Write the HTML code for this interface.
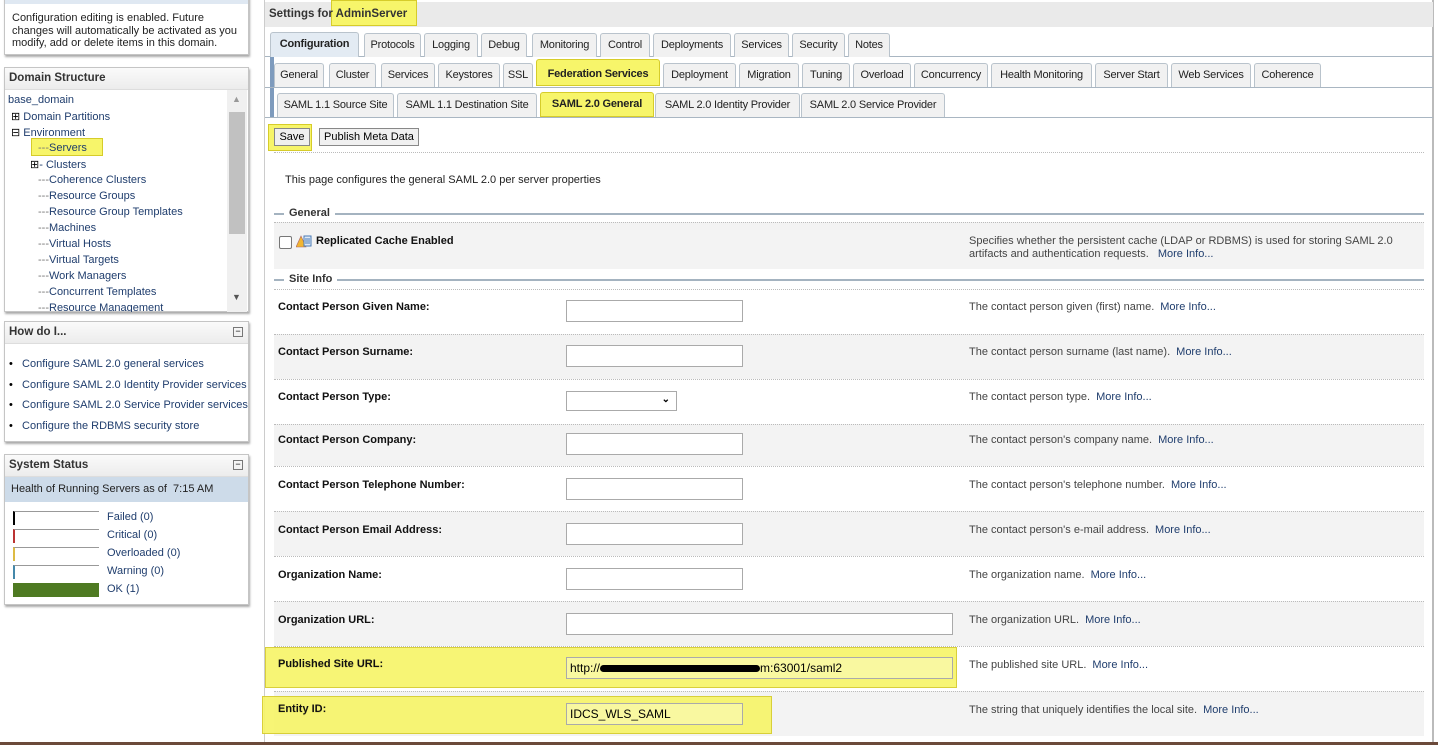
<!DOCTYPE html>
<html><head><meta charset="utf-8"><style>
*{box-sizing:border-box}
body{margin:0;width:1438px;height:745px;overflow:hidden;background:#fff;font-family:"Liberation Sans",sans-serif;font-size:11px;color:#000;position:relative}
.a{position:absolute}
.panel{position:absolute;left:4px;width:245px;border:1px solid #c5c5c5;box-shadow:1px 2px 2px #aaa;background:#fff}
.ph{height:22px;background:linear-gradient(#fafafa,#ececec);border-bottom:1px solid #ddd;font-weight:bold;font-size:11.5px;color:#333;padding:4px 4px}
.lnk{color:#1f3d6d}
.mini{position:absolute;right:5px;top:5px;width:10px;height:10px;border:1px solid #777;font-size:9px;line-height:7px;text-align:center}
.tab{position:absolute;height:24px;border:1px solid #b9c3cc;border-bottom:none;border-radius:3px 3px 0 0;background:#f1f1f1;padding:5px 0 0;text-align:center;color:#222;white-space:nowrap;letter-spacing:-0.2px}
.hl{background:#f7f56a;border:1px solid #d6cc2a}
.row{position:absolute;left:274px;width:1150px;height:45px;border-top:1px dotted #bbb}
.row.g{background:#f3f3f3}
.lab{position:absolute;left:4px;top:11px;font-weight:bold;color:#111}
.inp{position:absolute;left:292px;top:10px;width:177px;height:22px;border:1px solid #aaa;background:#fff}
.ds{position:absolute;left:695px;top:11px;color:#444}
.ds span{color:#1f3d6d;margin-left:6px}
.tree div{position:absolute;white-space:nowrap;color:#1f3d6d}
</style></head><body>

<div class="panel" style="top:-4px;height:59px;background:#fff;border-top:none"><div style="position:absolute;left:0;top:0;width:243px;height:8px;background:#dfe8f2"></div>
<div style="position:absolute;left:7px;top:16px;line-height:12.5px;color:#222">Configuration editing is enabled. Future changes will automatically be activated as you modify, add or delete items in this domain.</div></div>

<div class="panel" style="top:67px;height:245px"><div class="ph">Domain Structure</div>
<div class="tree" style="position:absolute;left:0;top:22px;width:243px;height:222px;overflow:hidden">
<div style="left:3px;top:4px">base_domain</div>
<div style="left:6px;top:20px;color:#000">⊞<span class="lnk"> Domain Partitions</span></div>
<div style="left:6px;top:36px;color:#000">⊟<span class="lnk"> Environment</span></div>
<div style="left:26px;top:48px;width:72px;height:18px;background:#f7f56a;border:1px solid #d6cc2a"></div>
<div style="left:33px;top:52px;color:#777">---<span class="lnk" style="color:#1f3d6d">Servers</span></div>
<div style="left:25px;top:68px;color:#000">⊞<span class="lnk">- Clusters</span></div>
<div style="left:33px;top:84px"><span style="color:#777">---</span>Coherence Clusters</div>
<div style="left:33px;top:100px"><span style="color:#777">---</span>Resource Groups</div>
<div style="left:33px;top:116px"><span style="color:#777">---</span>Resource Group Templates</div>
<div style="left:33px;top:132px"><span style="color:#777">---</span>Machines</div>
<div style="left:33px;top:148px"><span style="color:#777">---</span>Virtual Hosts</div>
<div style="left:33px;top:164px"><span style="color:#777">---</span>Virtual Targets</div>
<div style="left:33px;top:180px"><span style="color:#777">---</span>Work Managers</div>
<div style="left:33px;top:196px"><span style="color:#777">---</span>Concurrent Templates</div>
<div style="left:33px;top:212px"><span style="color:#777">---</span>Resource Management</div>
<div style="left:222px;top:0;width:20px;height:222px;background:#f0f0f0;position:absolute"></div>
<div style="left:224px;top:22px;width:16px;height:122px;background:#c1c1c1;position:absolute"></div>
<div style="left:227px;top:4px;color:#999;font-size:9px">▲</div>
<div style="left:227px;top:202px;color:#555;font-size:9px">▼</div>
</div></div>

<div class="panel" style="top:321px;height:121px"><div class="ph">How do I...</div><div class="mini">−</div>
<div style="position:absolute;left:4px;top:32px;line-height:20.5px">
<div>•&nbsp;&nbsp;&nbsp;<span class="lnk">Configure SAML 2.0 general services</span></div>
<div>•&nbsp;&nbsp;&nbsp;<span class="lnk">Configure SAML 2.0 Identity Provider services</span></div>
<div>•&nbsp;&nbsp;&nbsp;<span class="lnk">Configure SAML 2.0 Service Provider services</span></div>
<div>•&nbsp;&nbsp;&nbsp;<span class="lnk">Configure the RDBMS security store</span></div></div></div>

<div class="panel" style="top:454px;height:151px"><div class="ph">System Status</div><div class="mini">−</div>
<div style="position:absolute;left:0;top:22px;width:243px;height:25px;background:#cddbe9;padding:6px 6px;color:#222">Health of Running Servers as of&nbsp; 7:15 AM</div>
<div class="a" style="left:8px;top:56px;width:86px;height:14px;border-top:1px solid #999;border-left:2px solid #000"></div><div class="a lnk" style="left:102px;top:56px">Failed (0)</div>
<div class="a" style="left:8px;top:74px;width:86px;height:14px;border-top:1px solid #999;border-left:2px solid #b33"></div><div class="a lnk" style="left:102px;top:74px">Critical (0)</div>
<div class="a" style="left:8px;top:92px;width:86px;height:14px;border-top:1px solid #999;border-left:2px solid #db4"></div><div class="a lnk" style="left:102px;top:92px">Overloaded (0)</div>
<div class="a" style="left:8px;top:110px;width:86px;height:14px;border-top:1px solid #999;border-left:2px solid #48a"></div><div class="a lnk" style="left:102px;top:110px">Warning (0)</div>
<div class="a" style="left:8px;top:128px;width:86px;height:14px;background:#4e7a22"></div><div class="a lnk" style="left:102px;top:128px">OK (1)</div>
</div>

<div class="a" style="left:264px;top:0;width:1170px;height:745px;border-left:1px solid #ccc;border-right:2px solid #bbb"></div>
<div class="a" style="left:265px;top:2px;width:1168px;height:25px;background:#eaeaea"></div>
<div class="a" style="left:331px;top:0;width:86px;height:26px;background:#f7f56a;border:1px solid #d6cc2a"></div>
<div class="a" style="left:269px;top:8px;font-weight:bold;font-size:11.5px;color:#333">Settings for AdminServer</div>

<div class="a" style="left:265px;top:56px;width:1168px;border-top:1px solid #a9b6c2"></div>
<div class="tab" style="left:270px;top:32px;width:89px;background:#e3ebf3;font-weight:bold;height:25px">Configuration</div>
<div class="tab" style="left:364px;top:33px;width:57px">Protocols</div>
<div class="tab" style="left:424px;top:33px;width:54px">Logging</div>
<div class="tab" style="left:481px;top:33px;width:46px">Debug</div>
<div class="tab" style="left:532px;top:33px;width:65px">Monitoring</div>
<div class="tab" style="left:600px;top:33px;width:50px">Control</div>
<div class="tab" style="left:653px;top:33px;width:78px">Deployments</div>
<div class="tab" style="left:734px;top:33px;width:55px">Services</div>
<div class="tab" style="left:792px;top:33px;width:53px">Security</div>
<div class="tab" style="left:848px;top:33px;width:42px">Notes</div>

<div class="a" style="left:270px;top:57px;width:4px;height:60px;background:#7e9bbd"></div>
<div class="a" style="left:265px;top:87px;width:1168px;border-top:1px solid #a9b6c2"></div>
<div class="tab" style="left:274px;top:63px;width:50px">General</div>
<div class="tab" style="left:329px;top:63px;width:47px">Cluster</div>
<div class="tab" style="left:381px;top:63px;width:54px">Services</div>
<div class="tab" style="left:438px;top:63px;width:62px">Keystores</div>
<div class="tab" style="left:503px;top:63px;width:30px">SSL</div>
<div class="tab hl" style="left:536px;top:59px;height:27px;padding-top:8px;font-weight:bold;width:124px">Federation Services</div>
<div class="tab" style="left:663px;top:63px;width:73px">Deployment</div>
<div class="tab" style="left:739px;top:63px;width:60px">Migration</div>
<div class="tab" style="left:802px;top:63px;width:48px">Tuning</div>
<div class="tab" style="left:853px;top:63px;width:58px">Overload</div>
<div class="tab" style="left:914px;top:63px;width:74px">Concurrency</div>
<div class="tab" style="left:991px;top:63px;width:101px">Health Monitoring</div>
<div class="tab" style="left:1095px;top:63px;width:73px">Server Start</div>
<div class="tab" style="left:1171px;top:63px;width:80px">Web Services</div>
<div class="tab" style="left:1254px;top:63px;width:67px">Coherence</div>

<div class="a" style="left:265px;top:117px;width:1168px;border-top:1px solid #a9b6c2"></div>
<div class="tab" style="left:277px;top:93px;width:117px">SAML 1.1 Source Site</div>
<div class="tab" style="left:397px;top:93px;width:140px">SAML 1.1 Destination Site</div>
<div class="tab hl" style="left:540px;top:92px;height:25px;font-weight:bold;width:114px">SAML 2.0 General</div>
<div class="tab" style="left:655px;top:93px;width:145px">SAML 2.0 Identity Provider</div>
<div class="tab" style="left:801px;top:93px;width:144px">SAML 2.0 Service Provider</div>

<div class="a" style="left:268px;top:124px;width:44px;height:27px;background:#f7f56a;border:1px solid #d6cc2a"></div>
<div class="a" style="left:274px;top:128px;width:36px;height:18px;border:1px solid #888;background:#f0f0f0;text-align:center;padding-top:2px">Save</div>
<div class="a" style="left:319px;top:128px;width:100px;height:18px;border:1px solid #888;background:#f0f0f0;text-align:center;padding-top:2px">Publish Meta Data</div>
<div class="a" style="left:274px;top:152px;width:1150px;border-top:1px dotted #bbb"></div>
<div class="a" style="left:285px;top:174px;color:#222">This page configures the general SAML 2.0 per server properties</div>

<div class="a" style="left:274px;top:213px;width:1150px;border-top:2px solid #a4b3c0"></div>
<div class="a" style="left:284px;top:207px;background:#fff;padding:0 5px;font-weight:bold;color:#333">General</div>
<div class="a" style="left:274px;top:222px;width:1150px;height:47px;background:#f3f3f3;border-top:1px dotted #bbb"></div>
<div class="a" style="left:279px;top:236px;width:13px;height:13px;border:1px solid #777;border-radius:2px;background:#fff"></div>
<div class="a" style="left:296px;top:234px;width:16px;height:16px"><svg width="16" height="16"><path d="M5 2 L10 13 L0 13Z" fill="#f2b531" stroke="#a66" stroke-width=".6"/><rect x="8" y="2" width="7" height="10" fill="#dfe9f6" stroke="#4a7ab5"/><path d="M9 5h5M9 7h5M9 9h5" stroke="#4a7ab5"/></svg></div>
<div class="a" style="left:316px;top:235px;font-weight:bold;color:#111">Replicated Cache Enabled</div>
<div class="a" style="left:969px;top:235px;color:#444;line-height:13px">Specifies whether the persistent cache (LDAP or RDBMS) is used for storing SAML 2.0<br>artifacts and authentication requests. <span class="lnk" style="margin-left:6px">More Info...</span></div>

<div class="a" style="left:274px;top:279px;width:1150px;border-top:2px solid #a4b3c0"></div>
<div class="a" style="left:284px;top:273px;background:#fff;padding:0 5px;font-weight:bold;color:#333">Site Info</div>

<div class="row" style="top:289px"><div class="lab">Contact Person Given Name:</div><div class="inp"></div><div class="ds">The contact person given (first) name.<span>More Info...</span></div></div>
<div class="row g" style="top:334px"><div class="lab">Contact Person Surname:</div><div class="inp"></div><div class="ds">The contact person surname (last name).<span>More Info...</span></div></div>
<div class="row" style="top:379px"><div class="lab">Contact Person Type:</div><div class="inp" style="width:111px;height:20px;top:11px"><span style="position:absolute;right:6px;top:2px;font-size:10px;font-weight:bold">&#8964;</span></div><div class="ds">The contact person type.<span>More Info...</span></div></div>
<div class="row g" style="top:424px;height:42px"><div class="lab" style="top:9px">Contact Person Company:</div><div class="inp" style="top:8px"></div><div class="ds" style="top:9px">The contact person's company name.<span>More Info...</span></div></div>
<div class="row" style="top:466px"><div class="lab" style="top:12px">Contact Person Telephone Number:</div><div class="inp" style="top:11px"></div><div class="ds" style="top:12px">The contact person's telephone number.<span>More Info...</span></div></div>
<div class="row g" style="top:511px"><div class="lab" style="top:12px">Contact Person Email Address:</div><div class="inp" style="top:11px"></div><div class="ds" style="top:12px">The contact person's e-mail address.<span>More Info...</span></div></div>
<div class="row" style="top:556px"><div class="lab" style="top:12px">Organization Name:</div><div class="inp" style="top:11px"></div><div class="ds" style="top:12px">The organization name.<span>More Info...</span></div></div>
<div class="row g" style="top:601px"><div class="lab" style="top:12px">Organization URL:</div><div class="inp" style="top:11px;width:387px"></div><div class="ds" style="top:12px">The organization URL.<span>More Info...</span></div></div>
<div class="row" style="top:646px"><div class="lab" style="top:12px">Published Site URL:</div><div class="ds" style="top:12px">The published site URL.<span>More Info...</span></div></div>
<div class="row g" style="top:691px"><div class="lab" style="top:12px">Entity ID:</div><div class="ds" style="top:12px">The string that uniquely identifies the local site.<span>More Info...</span></div></div>

<div class="a" style="left:265px;top:647px;width:692px;height:41px;background:#f7f56a;border:1px solid #d6cc2a;opacity:.92"></div>
<div class="a" style="left:278px;top:658px;font-weight:bold;color:#111">Published Site URL:</div>
<div class="a" style="left:566px;top:657px;width:387px;height:22px;border:1px solid #aaa;background:#f9f8a0;padding:3px 3px;font-size:12px">http://<span style="display:inline-block;width:160px;height:7px;background:#000;border-radius:4px;vertical-align:middle"></span>m:63001/saml2</div>
<div class="a" style="left:262px;top:696px;width:510px;height:38px;background:#f7f56a;border:1px solid #d6cc2a;opacity:.92"></div>
<div class="a" style="left:278px;top:703px;font-weight:bold;color:#111">Entity ID:</div>
<div class="a" style="left:566px;top:703px;width:177px;height:22px;border:1px solid #aaa;background:#f9f8a0;padding:3px 3px;font-size:12px">IDCS_WLS_SAML</div>
<div class="a" style="left:0;top:742px;width:1438px;height:3px;background:#6b4a3a"></div>
</body></html>
